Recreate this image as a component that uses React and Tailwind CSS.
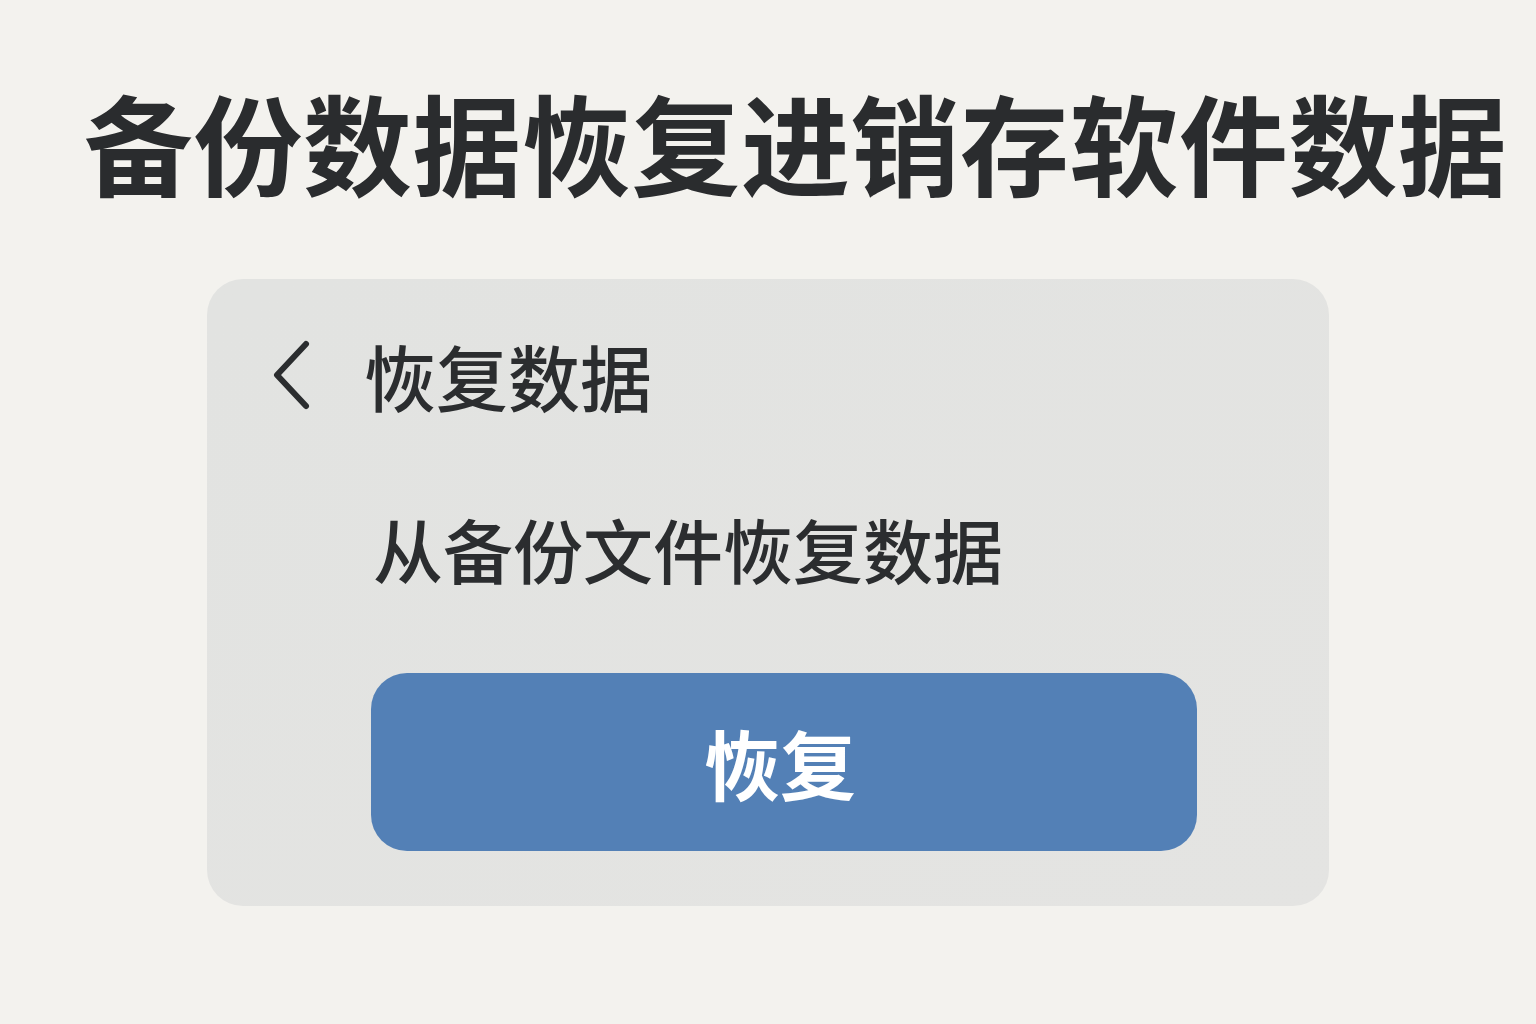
export default function App() {
  return (
    <div
      className="w-[1536px] h-[1024px] bg-[#f3f2ee] overflow-hidden flex flex-col"
      style={{ fontFamily: '"Noto Sans CJK SC", "Noto Sans", sans-serif' }}
    >
      <h1 className="pl-[84px] pt-[86px] text-[109px] leading-none font-bold tracking-[0.5px] text-[#2a2c2e] whitespace-nowrap">
        备份数据恢复进销存软件数据
      </h1>
      <div className="ml-[207px] mt-[84px] w-[1122px] h-[627px] rounded-[36px] bg-gradient-to-br from-[#e2e3e1] to-[#e4e4e2] flex flex-col">
        <div className="flex items-center pl-[65px] pt-[60px] h-[132px]">
          <svg width="40" height="72" viewBox="0 0 40 72" className="shrink-0">
            <polyline
              points="34,5 5,36 34,67"
              fill="none"
              stroke="#2b2d2f"
              strokeWidth="6"
              strokeLinecap="round"
              strokeLinejoin="round"
            />
          </svg>
          <span className="ml-[52px] text-[72px] leading-none font-medium text-[#2b2d2f] whitespace-nowrap">
            恢复数据
          </span>
        </div>
        <p className="ml-[166px] mt-[103px] text-[70px] leading-none font-medium text-[#2b2d2f] whitespace-nowrap">
          从备份文件恢复数据
        </p>
        <button className="ml-[164px] mt-[89px] w-[826px] h-[178px] rounded-[36px] bg-[#5380b6] flex items-center justify-center">
          <span className="mr-[8px] text-[76px] leading-none font-semibold text-white">恢复</span>
        </button>
      </div>
    </div>
  );
}
